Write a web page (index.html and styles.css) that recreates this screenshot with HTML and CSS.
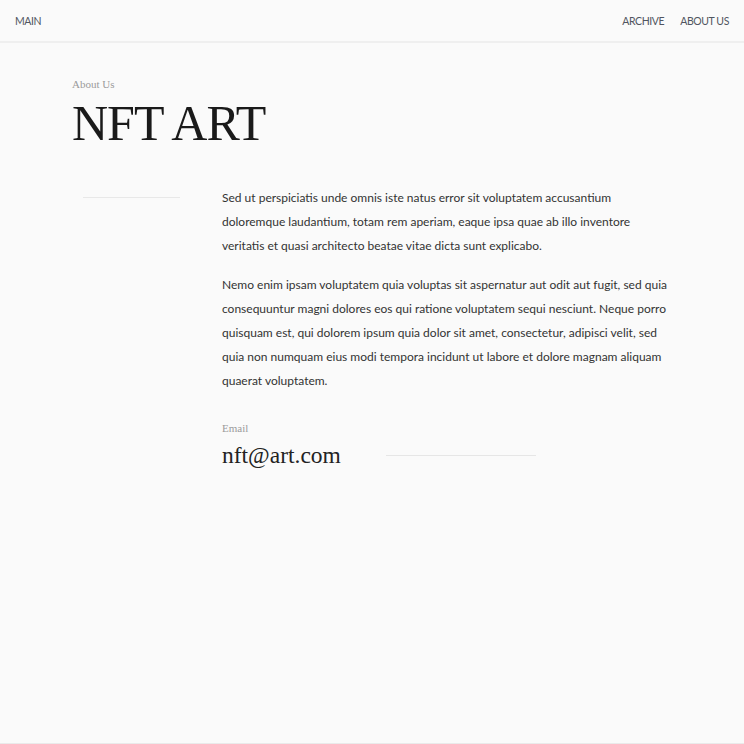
FILE: index.html
```html
<!DOCTYPE html>
<html lang="en">
<head>
<meta charset="utf-8">
<title>NFT ART - About Us</title>
<link rel="stylesheet" href="styles.css">
</head>
<body>
<header class="topbar">
  <a class="nav-link" href="#">MAIN</a>
  <nav class="nav">
    <a class="nav-link" href="#">ARCHIVE</a>
    <a class="nav-link" href="#">ABOUT US</a>
  </nav>
</header>
<main class="page">
  <div class="eyebrow">About Us</div>
  <h1 class="title">NFT ART</h1>
  <section class="content">
    <div class="side"><div class="side-line"></div></div>
    <div class="body">
      <p class="para">Sed ut perspiciatis unde omnis iste natus error sit voluptatem accusantium doloremque laudantium, totam rem aperiam, eaque ipsa quae ab illo inventore veritatis et quasi architecto beatae vitae dicta sunt explicabo.</p>
      <p class="para">Nemo enim ipsam voluptatem quia voluptas sit aspernatur aut odit aut fugit, sed quia consequuntur magni dolores eos qui ratione voluptatem sequi nesciunt. Neque porro quisquam est, qui dolorem ipsum quia dolor sit amet, consectetur, adipisci velit, sed quia non numquam eius modi tempora incidunt ut labore et dolore magnam aliquam quaerat voluptatem.</p>
      <div class="contact">
        <div class="eyebrow small">Email</div>
        <div class="email-row">
          <span class="email">nft@art.com</span>
          <span class="email-line"></span>
        </div>
      </div>
    </div>
  </section>
</main>
</body>
</html>
```

FILE: styles.css
```css
html, body {
  margin: 0;
  padding: 0;
  background: #fafafa;
  height: 100%;
}
body {
  font-family: "Lato", "Liberation Sans", sans-serif;
  color: #333;
  box-sizing: border-box;
  border-bottom: 1px solid #eaeaea;
}
.topbar {
  height: 41px;
  border-bottom: 2px solid #efefef;
  display: flex;
  align-items: center;
  justify-content: space-between;
  padding: 0 15px;
}
.nav {
  display: flex;
  gap: 16px;
}
.nav-link {
  font-family: "Lato", "Liberation Sans", sans-serif;
  font-size: 10.5px;
  color: #505560;
  text-decoration: none;
  letter-spacing: -0.4px;
}
.page {
  padding: 34px 0 0 72px;
}
.eyebrow {
  font-family: "Liberation Serif", serif;
  font-size: 11px;
  color: #9a9a9a;
  line-height: 14px;
}
.title {
  font-family: "Liberation Serif", serif;
  font-weight: normal;
  font-size: 50px;
  letter-spacing: -1px;
  line-height: 56px;
  margin: 4px 0 0;
  color: #1a1a1a;
}
.content {
  display: flex;
  margin-top: 35px;
}
.side {
  width: 150px;
  flex: none;
  padding-top: 11px;
}
.side-line {
  margin-left: 11px;
  width: 97px;
  height: 1px;
  background: #e8e8e8;
}
.body {
  width: 450px;
}
.para {
  font-size: 12px;
  line-height: 24px;
  margin: 0 0 15px;
  color: #333;
}
.contact {
  margin-top: 28px;
}
.email-row {
  display: flex;
  align-items: center;
  margin-top: 6px;
}
.email {
  font-family: "Liberation Serif", serif;
  font-size: 23.5px;
  color: #222;
  line-height: 28px;
}
.email-line {
  margin-left: 45px;
  width: 150px;
  height: 1px;
  background: #e6e6e6;
}
```
